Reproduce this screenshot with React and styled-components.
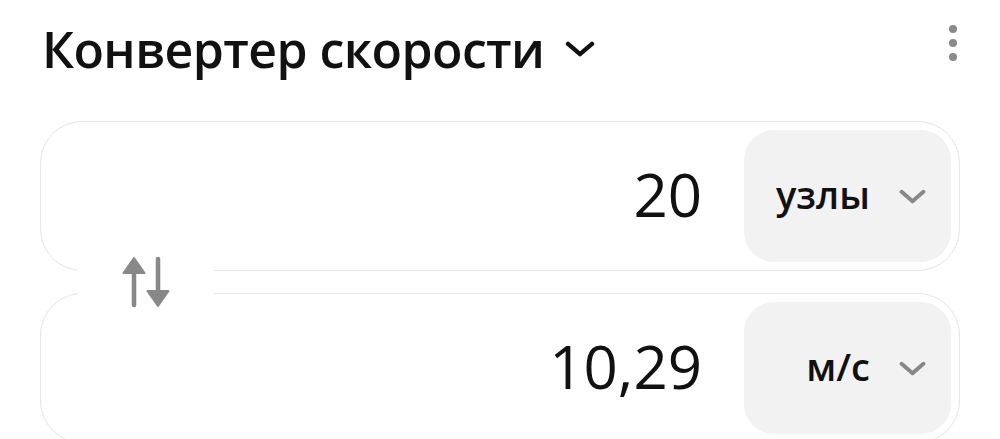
import React from "react";
import styled, { createGlobalStyle } from "styled-components";

const GlobalStyle = createGlobalStyle`
  html, body {
    margin: 0;
    padding: 0;
    background: #ffffff;
  }
  body {
    font-family: "Open Sans", "Noto Sans", Arial, sans-serif;
    color: #111111;
  }
`;

const Page = styled.div`
  width: 1000px;
  height: 439px;
  overflow: hidden;
  box-sizing: border-box;
  padding: 0 40px 0 40px;
`;

const Header = styled.div`
  display: flex;
  align-items: center;
  justify-content: space-between;
  height: 100px;
  padding-left: 2px;
  box-sizing: border-box;
`;

const TitleButton = styled.button`
  display: flex;
  align-items: center;
  gap: 21px;
  border: none;
  background: none;
  padding: 0;
  margin-top: -2px;
  cursor: pointer;
  font-family: inherit;
`;

const Title = styled.h1`
  margin: 0;
  font-size: 50px;
  font-weight: 600;
  letter-spacing: -0.6px;
  color: #111111;
  line-height: 1;
`;

const MoreButton = styled.button`
  display: flex;
  flex-direction: column;
  align-self: flex-start;
  gap: 6px;
  border: none;
  background: none;
  padding: 0;
  margin: 25px 3px 0 0;
  cursor: pointer;
`;

const Dot = styled.span`
  width: 8px;
  height: 8px;
  border-radius: 50%;
  background: #8a8a8a;
`;

const Converter = styled.div`
  position: relative;
  display: flex;
  flex-direction: column;
  gap: 22px;
  margin-top: 21px;
`;

const Field = styled.div`
  display: flex;
  align-items: center;
  justify-content: flex-end;
  height: 150px;
  box-sizing: border-box;
  padding: 8px;
  border: 1.5px solid #e6e6e6;
  border-radius: 42px;
  background: #ffffff;
`;

const ValueInput = styled.input`
  flex: 1;
  min-width: 0;
  border: none;
  outline: none;
  background: transparent;
  text-align: right;
  font-family: "Open Sans", "Noto Sans", Arial, sans-serif;
  font-size: 60px;
  font-weight: 400;
  color: #111111;
  margin: 0 42px 0 0;
  padding: 0 0 4px 0;
`;

const UnitSelect = styled.button`
  display: flex;
  align-items: center;
  justify-content: flex-end;
  gap: 29px;
  width: 207px;
  height: 132px;
  box-sizing: border-box;
  padding: 0 25px 0 0;
  border: none;
  border-radius: 30px;
  background: #f2f2f2;
  cursor: pointer;
  font-family: "Open Sans", "Noto Sans", Arial, sans-serif;
`;

const UnitLabel = styled.span`
  font-size: 38px;
  font-weight: 600;
  color: #111111;
  line-height: 1;
  padding-bottom: 4px;
`;

const SwapButton = styled.button`
  position: absolute;
  left: 38px;
  top: 128px;
  width: 136px;
  height: 66px;
  display: flex;
  align-items: center;
  justify-content: center;
  border: none;
  background: #ffffff;
  padding: 0;
  cursor: pointer;
`;

const Chevron = ({ width, height, color, stroke }) => (
  <svg width={width} height={height} viewBox="0 0 26 14" fill="none">
    <path
      d="M2.5 2.5 L13 11.5 L23.5 2.5"
      stroke={color}
      strokeWidth={stroke}
      strokeLinecap="round"
      strokeLinejoin="round"
    />
  </svg>
);

const SwapIcon = () => (
  <svg width="48" height="54" viewBox="0 0 48 54" fill="none">
    {/* up arrow */}
    <path d="M12 50 V14" stroke="#888888" strokeWidth="4.5" strokeLinecap="round" />
    <path d="M1.5 18 L12 3 L22.5 18 Z" fill="#888888" stroke="#888888" strokeWidth="2" strokeLinejoin="round" />
    {/* down arrow */}
    <path d="M36 4 V40" stroke="#888888" strokeWidth="4.5" strokeLinecap="round" />
    <path d="M25.5 36 L36 51 L46.5 36 Z" fill="#888888" stroke="#888888" strokeWidth="2" strokeLinejoin="round" />
  </svg>
);

const rows = [
  { value: "20", unit: "узлы" },
  { value: "10,29", unit: "м/с" },
];

export default function App() {
  return (
    <>
      <GlobalStyle />
      <Page>
        <Header>
          <TitleButton>
            <Title>Конвертер скорости</Title>
            <Chevron width={30} height={16} color="#111111" stroke={3.8} />
          </TitleButton>
          <MoreButton aria-label="Ещё">
            <Dot />
            <Dot />
            <Dot />
          </MoreButton>
        </Header>
        <Converter>
          {rows.map((row) => (
            <Field key={row.unit}>
              <ValueInput readOnly defaultValue={row.value} />
              <UnitSelect>
                <UnitLabel>{row.unit}</UnitLabel>
                <Chevron width={27} height={15} color="#888888" stroke={3.8} />
              </UnitSelect>
            </Field>
          ))}
          <SwapButton aria-label="Поменять местами">
            <SwapIcon />
          </SwapButton>
        </Converter>
      </Page>
    </>
  );
}
